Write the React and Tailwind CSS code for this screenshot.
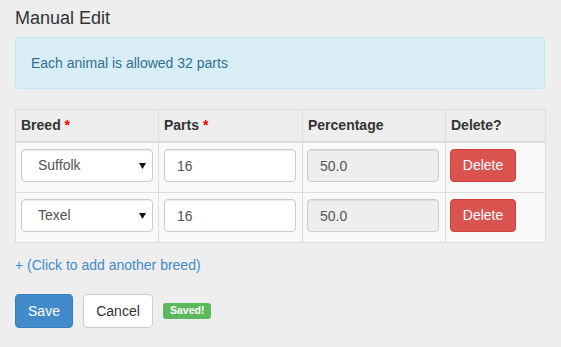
import React, { useState } from "react";

const breedsList = ["Suffolk", "Texel", "Dorper", "Merino"];

const Arrow = () => (
  <svg width="7" height="6" viewBox="0 0 7 6" className="pointer-events-none absolute right-[7px] top-[14px]">
    <path d="M0 0 L7 0 L3.5 6 Z" fill="#111" />
  </svg>
);

const App = () => {
  const [rows, setRows] = useState([
    { id: 1, breed: "Suffolk", parts: "16" },
    { id: 2, breed: "Texel", parts: "16" },
  ]);

  const total = 32;

  const updateRow = (id, key, value) => {
    setRows(rows.map((r) => (r.id === id ? { ...r, [key]: value } : r)));
  };

  return (
    <div
      className="min-h-[347px] bg-[#eeeeee] pl-[15px] pt-[8px] text-[14px] text-[#333]"
      style={{ fontFamily: '"Liberation Sans", Arial, sans-serif' }}
    >
      <h4 className="h-[20px] text-[18px] leading-[20px] text-[#333]">Manual Edit</h4>

      <div className="mt-[9px] w-[530px] rounded-[4px] border border-[#bce8f1] bg-[#d9edf7] p-[15px] leading-[20px] text-[#31708f]">
        Each animal is allowed {total} parts
      </div>

      <table className="mt-[20px] w-[530px] table-fixed border-collapse border border-[#dddddd]">
        <colgroup>
          <col className="w-[143px]" />
          <col className="w-[144px]" />
          <col className="w-[143px]" />
          <col className="w-[100px]" />
        </colgroup>
        <thead className="bg-[#eeeeee]">
          <tr className="border-b-2 border-[#dddddd]">
            <th className="border border-b-2 border-[#dddddd] px-[5px] py-[5px] text-left font-bold leading-[21px]">
              Breed <span className="text-[#ee0000]">*</span>
            </th>
            <th className="border border-b-2 border-[#dddddd] px-[5px] py-[5px] text-left font-bold leading-[21px]">
              Parts <span className="text-[#ee0000]">*</span>
            </th>
            <th className="border border-b-2 border-[#dddddd] px-[5px] py-[5px] text-left font-bold leading-[21px]">
              Percentage
            </th>
            <th className="border border-b-2 border-[#dddddd] px-[5px] py-[5px] text-left font-bold leading-[21px]">
              Delete?
            </th>
          </tr>
        </thead>
        <tbody className="bg-[#f9f9f9]">
          {rows.map((row) => {
            const pct = ((Number(row.parts) / total) * 100).toFixed(1);
            return (
              <tr key={row.id}>
                <td className="border border-[#dddddd] pb-[10px] pl-[5px] pr-[5px] pt-[6px] align-top">
                  <div className="relative">
                    <select
                      value={row.breed}
                      onChange={(e) => updateRow(row.id, "breed", e.target.value)}
                      className="h-[33px] w-full appearance-none rounded-[4px] border border-[#cccccc] bg-white pl-[16px] text-[14px] text-[#555] shadow-[inset_0_1px_1px_rgba(0,0,0,0.075)] outline-none"
                    >
                      {breedsList.map((b) => (
                        <option key={b}>{b}</option>
                      ))}
                    </select>
                    <Arrow />
                  </div>
                </td>
                <td className="border border-[#dddddd] pb-[10px] pl-[5px] pr-[6px] pt-[6px] align-top">
                  <input
                    value={row.parts}
                    onChange={(e) => updateRow(row.id, "parts", e.target.value)}
                    className="h-[33px] w-full rounded-[4px] border border-[#cccccc] bg-white px-[12px] text-[14px] text-[#555] shadow-[inset_0_1px_1px_rgba(0,0,0,0.075)] outline-none"
                  />
                </td>
                <td className="border border-[#dddddd] pb-[10px] pl-[4px] pr-[6px] pt-[6px] align-top">
                  <input
                    value={pct}
                    disabled
                    className="h-[33px] w-full rounded-[4px] border border-[#cccccc] bg-[#eeeeee] px-[12px] text-[14px] text-[#555] shadow-[inset_0_1px_1px_rgba(0,0,0,0.075)]"
                  />
                </td>
                <td className="border border-[#dddddd] pb-[10px] pl-[4px] pt-[6px] align-top">
                  <button
                    onClick={() => setRows(rows.filter((r) => r.id !== row.id))}
                    className="h-[33px] w-[66px] rounded-[4px] border border-[#d43f3a] bg-[#d9534f] text-[14px] text-white"
                  >
                    Delete
                  </button>
                </td>
              </tr>
            );
          })}
        </tbody>
      </table>

      <div className="mt-[12px] leading-[20px]">
        <a
          href="#"
          onClick={(e) => {
            e.preventDefault();
            setRows([...rows, { id: Date.now(), breed: "Suffolk", parts: "0" }]);
          }}
          className="text-[#428bca]"
        >
          + (Click to add another breed)
        </a>
      </div>

      <div className="mt-[19px] flex items-center gap-[10px]">
        <button className="h-[34px] w-[58px] rounded-[4px] border border-[#357ebd] bg-[#428bca] text-[14px] text-white">
          Save
        </button>
        <button className="h-[34px] w-[70px] rounded-[4px] border border-[#cccccc] bg-white text-[14px] text-[#333]">
          Cancel
        </button>
        <span className="rounded-[3px] bg-[#5cb85c] px-[7px] pb-[3px] pt-[2px] text-[10.5px] font-bold leading-[11px] text-white">
          Saved!
        </span>
      </div>
    </div>
  );
};

export default App;
